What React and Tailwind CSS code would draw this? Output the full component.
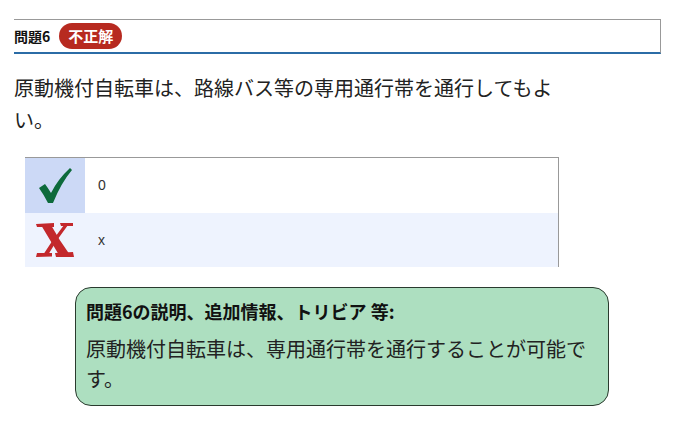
const jp = "font-['Noto_Sans_CJK_JP','Noto_Sans',sans-serif]";

function CheckIcon() {
  return (
    <svg width="34" height="36" viewBox="0 0 34 36">
      <path
        d="M1 20 L7 16 Q10 20 13 25 Q20 11 32 0 L34 2 Q23 15 15 35 L10 35 Q6 27 1 20 Z"
        fill="#0d6a3b"
      />
    </svg>
  );
}

function CrossIcon() {
  return (
    <svg width="40" height="36" viewBox="0 0 40 36">
      <g fill="#c3282c">
        <path d="M6 3 L16 3 Q24 18 35 33 L24 33 Q15 18 6 3 Z" />
        <path d="M29 3 L33 3 Q22 17 13 33 L8 33 Q18 17 29 3 Z" />
        <path d="M1 2 L19 1 L19 5 L2 5 Z" />
        <path d="M25 1 L38 1 L38 4 L26 4 Z" />
        <path d="M2 31 L17 31 L17 34.5 L1 35 Z" />
        <path d="M20 31 L38 30 L39 35 L21 35 Z" />
      </g>
    </svg>
  );
}

export default function App() {
  return (
    <div className={`${jp} bg-white w-[675px] h-[440px] px-[14px] pt-[19px] text-[#222]`}>
      <div className="flex items-center gap-[9px] h-[35px] border-t border-r border-[#999] border-b-2 border-b-[#2b6ca6]">
        <span className="text-[14px] font-bold text-[#111]">問題6</span>
        <span className="flex items-center h-[26px] px-[9px] rounded-full bg-[#b72a20] text-white text-[15px] font-bold">
          不正解
        </span>
      </div>

      <p className="mt-[18px] w-[555px] text-[20px] leading-[32px] text-[#222]">
        原動機付自転車は、路線バス等の専用通行帯を通行してもよい。
      </p>

      <div className="mt-[21px] ml-[11px] w-[534px] border-t border-r border-[#999]">
        <div className="flex h-[55px] bg-white">
          <div className="w-[60px] flex items-center justify-center bg-[#ccd9f6]">
            <CheckIcon />
          </div>
          <div className="flex items-center pl-[13px] text-[14px] font-['Liberation_Sans',sans-serif] text-[#333]">
            0
          </div>
        </div>
        <div className="flex h-[54px] bg-[#eef3fe]">
          <div className="w-[60px] flex items-center justify-center">
            <CrossIcon />
          </div>
          <div className="flex items-center pl-[13px] text-[14px] font-['Liberation_Sans',sans-serif] text-[#333]">
            x
          </div>
        </div>
      </div>

      <div className="mt-[20px] ml-[61px] w-[534px] rounded-[16px] border border-[#2a3a2e] bg-[#addfc0] pl-[10px] pr-[10px] pt-[11px] pb-[11px]">
        <div className="text-[18px] leading-[24px] font-bold text-[#111]">
          問題6の説明、追加情報、トリビア 等:
        </div>
        <p className="mt-[11px] text-[20px] leading-[30px] text-[#222]">
          原動機付自転車は、専用通行帯を通行することが可能です。
        </p>
      </div>
    </div>
  );
}
